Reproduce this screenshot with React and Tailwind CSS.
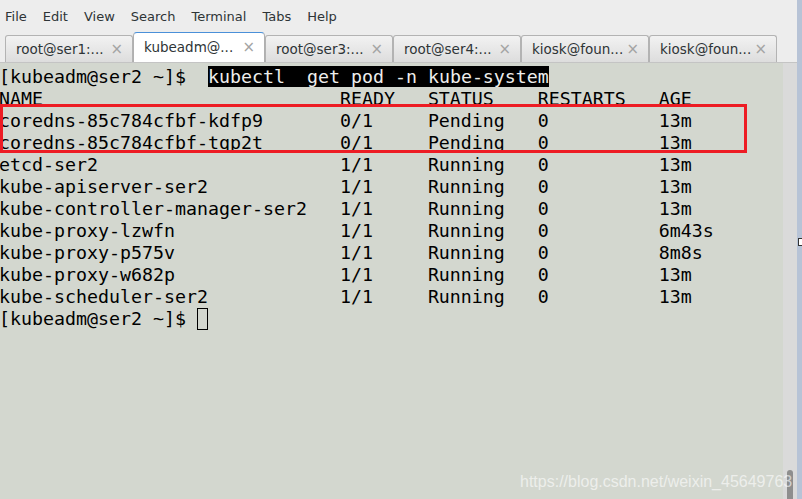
import React from "react";

const mono = { fontFamily: '"DejaVu Sans Mono", "Liberation Mono", monospace' };

const rows = [
  ["coredns-85c784cfbf-kdfp9", "0/1", "Pending", "0", "13m"],
  ["coredns-85c784cfbf-tqp2t", "0/1", "Pending", "0", "13m"],
  ["etcd-ser2", "1/1", "Running", "0", "13m"],
  ["kube-apiserver-ser2", "1/1", "Running", "0", "13m"],
  ["kube-controller-manager-ser2", "1/1", "Running", "0", "13m"],
  ["kube-proxy-lzwfn", "1/1", "Running", "0", "6m43s"],
  ["kube-proxy-p575v", "1/1", "Running", "0", "8m8s"],
  ["kube-proxy-w682p", "1/1", "Running", "0", "13m"],
  ["kube-scheduler-ser2", "1/1", "Running", "0", "13m"],
];

const pad = (s, n) => s + " ".repeat(Math.max(0, n - s.length));
const fmt = (r) => pad(r[0], 31) + pad(r[1], 8) + pad(r[2], 10) + pad(r[3], 11) + r[4];

const tabs = [
  { label: "root@ser1:...", w: "w-[128px]" },
  { label: "kubeadm@...", w: "w-[132px]", active: true },
  { label: "root@ser3:...", w: "w-[128px]" },
  { label: "root@ser4:...", w: "w-[128px]" },
  { label: "kiosk@foun...", w: "w-[128px]" },
  { label: "kiosk@foun...", w: "w-[128px]" },
];

export default function App() {
  const ui = { fontFamily: '"DejaVu Sans", "Noto Sans", sans-serif' };
  return (
    <div className="relative flex h-[499px] w-[802px] overflow-hidden bg-[#ededed]">
      <div className="flex h-full w-[797px] flex-col">
        {/* menu bar */}
        <div className="flex h-[33px] items-center gap-[16px] pl-[5px] text-[13px] text-[#2e3436]" style={ui}>
          <span>File</span>
          <span>Edit</span>
          <span>View</span>
          <span>Search</span>
          <span>Terminal</span>
          <span>Tabs</span>
          <span>Help</span>
        </div>
        {/* tab bar */}
        <div className="flex h-[30px] items-end border-b border-[#c4c4c4] pl-[5px]" style={ui}>
          {tabs.map((t, i) =>
            t.active ? (
              <div
                key={i}
                className={`${t.w} flex h-[30px] items-center justify-between rounded-t-[4px] border-x border-t border-[#4a90d9] border-x-[#b0b0b0] bg-white pl-[10px] pr-[9px] text-[13.5px] text-[#2e3436]`}
              >
                <span>{t.label}</span>
                <span className="text-[15px] text-[#a3a3a3]">×</span>
              </div>
            ) : (
              <div
                key={i}
                className={`${t.w} flex h-[27px] items-center justify-between rounded-t-[3px] border-x border-t border-[#b3b3b3] bg-gradient-to-b from-[#f2f2f2] to-[#dddddd] pl-[10px] pr-[9px] text-[13.5px] text-[#2e3436]`}
              >
                <span>{t.label}</span>
                <span className="text-[15px] text-[#a3a3a3]">×</span>
              </div>
            )
          )}
        </div>
        {/* terminal */}
        <div className="flex flex-1">
          <div className="relative flex-1 bg-[#d3d7cf] pt-[3px]">
            <div className="ml-[-1px] whitespace-pre text-[18.27px] leading-[22px] text-black" style={mono}>
              <div>
                {"[kubeadm@ser2 ~]$  "}
                <span className="bg-black text-[#eeeeec]">kubectl  get pod -n kube-system</span>
              </div>
              <div>{fmt(["NAME", "READY", "STATUS", "RESTARTS", "AGE"])}</div>
              {rows.map((r, i) => (
                <div key={i}>{fmt(r)}</div>
              ))}
              <div className="flex">
                <span>{"[kubeadm@ser2 ~]$ "}</span>
                <span className="box-border h-[22px] w-[11px] border border-black"></span>
              </div>
            </div>
            {/* red annotation box */}
            <div className="absolute left-0 top-[41px] h-[49px] w-[747px] border-[3px] border-[#ed1c24]"></div>
          </div>
          <div className="relative w-[14px] bg-[#dadada]">
            <div className="absolute bottom-0 left-[4px] h-[29px] w-[6px] rounded-t-[3px] bg-[#8e8e8e]"></div>
          </div>
        </div>
      </div>
      <div className="relative h-full w-[5px] bg-[#b7c3d6]">
        <div className="absolute left-[1px] top-[238px] h-[8px] w-[6px] border border-[#333] bg-white"></div>
      </div>
      {/* watermark */}
      <div
        className="absolute left-[520px] top-[470px] text-[16px] text-white/60"
        style={{ fontFamily: '"Liberation Sans", Arial, sans-serif' }}
      >
        https://blog.csdn.net/weixin_45649763
      </div>
    </div>
  );
}
